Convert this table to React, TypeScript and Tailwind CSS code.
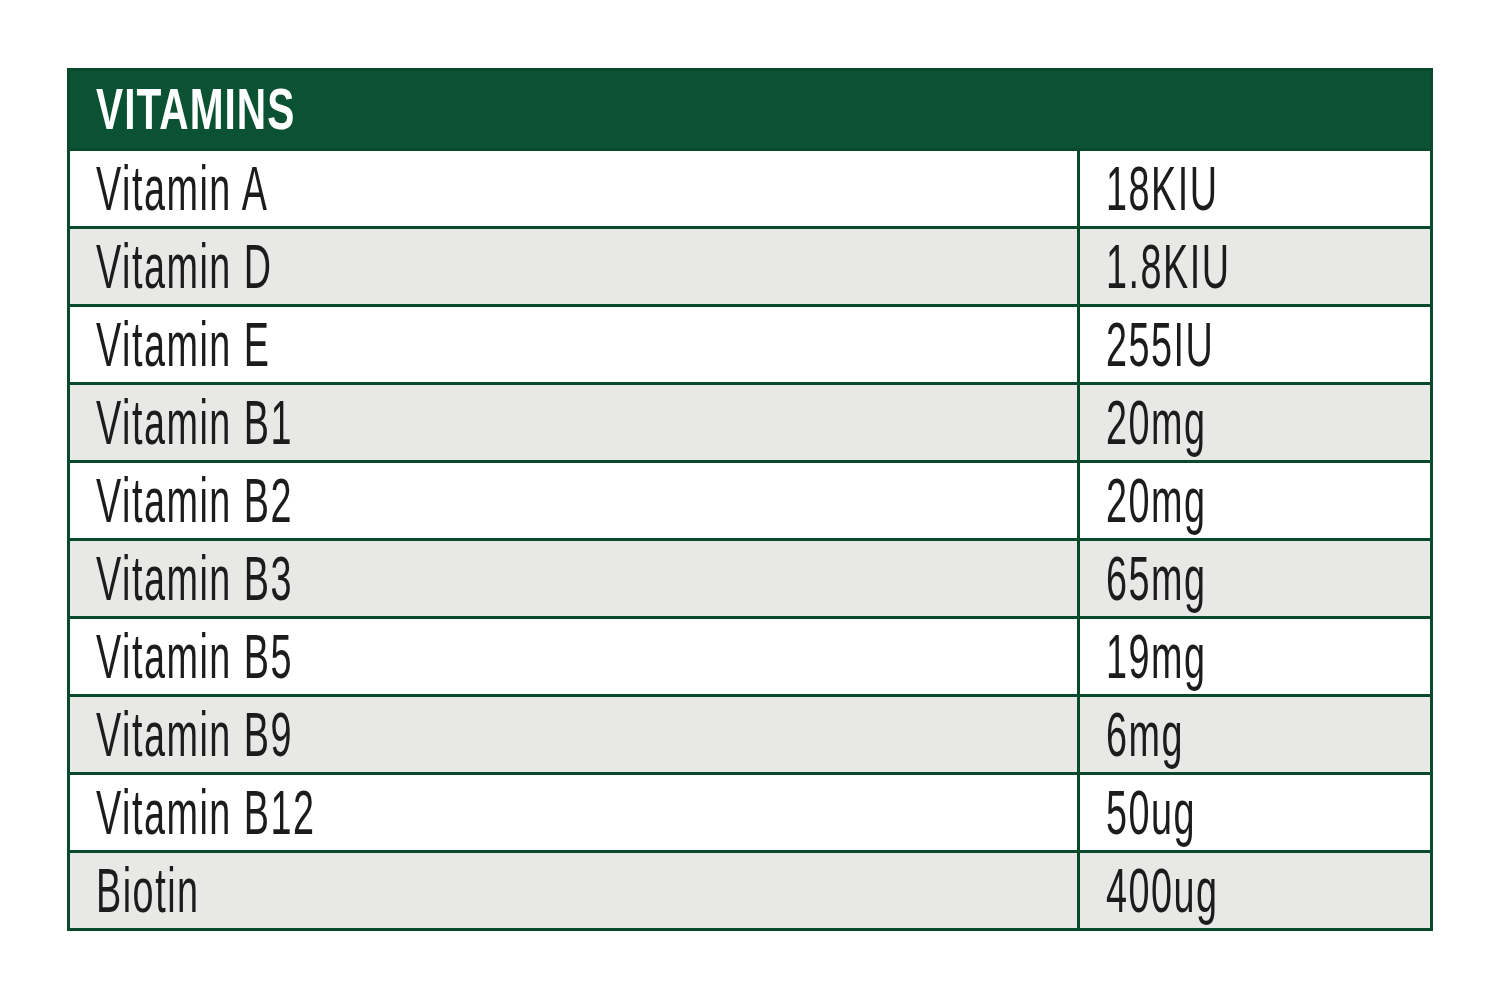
import React from "react";

const rows: [string, string][] = [
  ["Vitamin A", "18KIU"],
  ["Vitamin D", "1.8KIU"],
  ["Vitamin E", "255IU"],
  ["Vitamin B1", "20mg"],
  ["Vitamin B2", "20mg"],
  ["Vitamin B3", "65mg"],
  ["Vitamin B5", "19mg"],
  ["Vitamin B9", "6mg"],
  ["Vitamin B12", "50ug"],
  ["Biotin", "400ug"],
];

export default function App() {
  return (
    <div className="w-[1500px] h-[1003px] bg-white pt-[68px] pl-[67px]" style={{ fontFamily: '"Liberation Sans", Arial, sans-serif' }}>
      <div className="w-[1366px] border-[3px] border-[#0a4a2c]">
        <div className="h-[77px] bg-[#0b5232] flex items-center pl-[26px]">
          <span className="inline-block origin-left scale-x-[0.7] text-[58px] font-bold text-white leading-none tracking-[1.5px] pb-[1px]">VITAMINS</span>
        </div>
        {rows.map(([name, val], i) => (
          <div
            key={name}
            className={`h-[78px] border-t-[3px] border-[#0a4a2c] grid grid-cols-[1010px_1fr] ${i % 2 === 1 ? "bg-[#e8e9e7]" : "bg-white"}`}
          >
            <div className="border-r-[3px] border-[#0a4a2c] flex items-center pl-[26px] overflow-hidden">
              <span className="inline-block origin-left scale-x-[0.6] text-[63px] text-[#1c1c1c] leading-none whitespace-nowrap tracking-[2.5px]">{name}</span>
            </div>
            <div className="flex items-center pl-[26px] overflow-hidden">
              <span className="inline-block origin-left scale-x-[0.6] text-[63px] text-[#1c1c1c] leading-none whitespace-nowrap tracking-[2.5px]">{val}</span>
            </div>
          </div>
        ))}
      </div>
    </div>
  );
}
